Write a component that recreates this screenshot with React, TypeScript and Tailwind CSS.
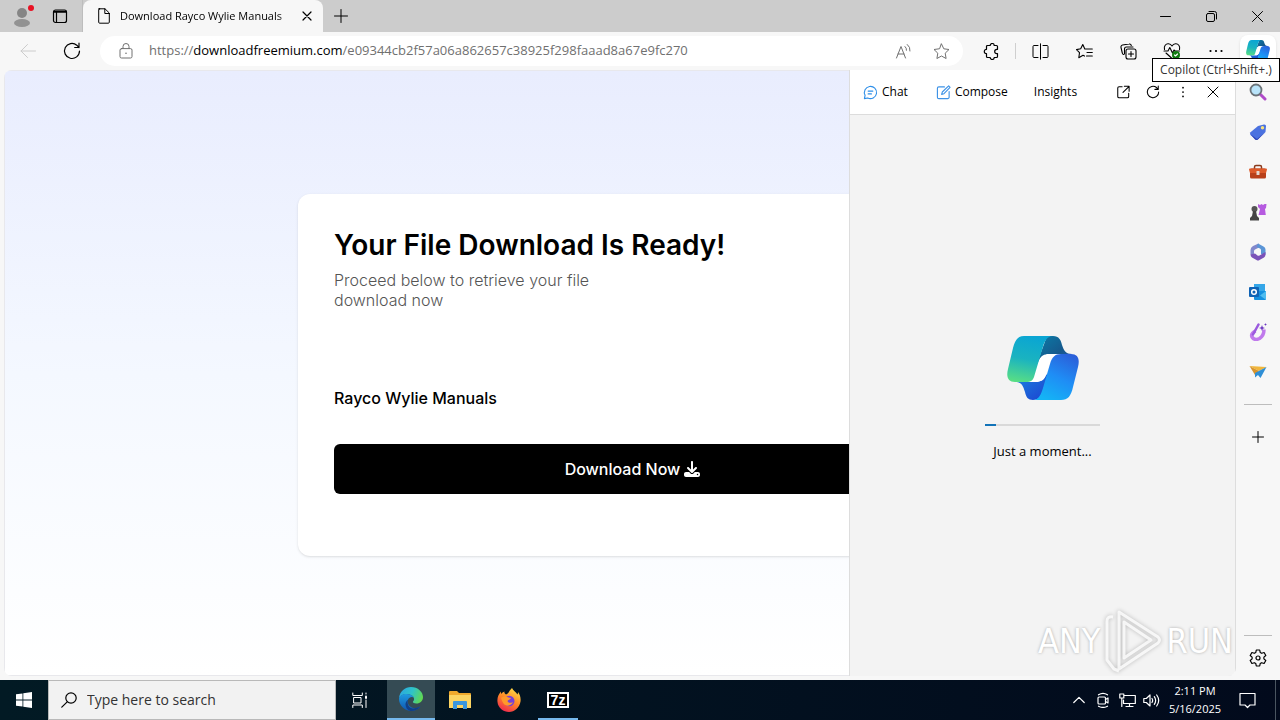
import type { ReactNode } from "react"
import { FaDownload } from "react-icons/fa6"

type IconProps = {
  size?: number
  box?: number
  className?: string
  stroke?: number
  children: ReactNode
}

function Icon({ size = 16, box = 16, className = "", stroke = 1, children }: IconProps) {
  return (
    <svg
      width={size}
      height={size}
      viewBox={`0 0 ${box} ${box}`}
      fill="none"
      stroke="currentColor"
      strokeWidth={stroke}
      strokeLinecap="round"
      strokeLinejoin="round"
      className={`shrink-0 ${className}`}
      aria-hidden="true"
    >
      {children}
    </svg>
  )
}

function CopilotLogo({ id, className }: { id: string; className: string }) {
  return (
    <svg viewBox="0 0 72 64" className={className} aria-hidden="true">
      <defs>
        <linearGradient id={`${id}-left`} x1="0.5" y1="0" x2="0.3" y2="1">
          <stop offset="0" stopColor="#0aa5d3" />
          <stop offset="0.5" stopColor="#1ab3c0" />
          <stop offset="1" stopColor="#57dd86" />
        </linearGradient>
        <linearGradient id={`${id}-right`} x1="0.8" y1="0" x2="0.3" y2="1">
          <stop offset="0" stopColor="#2b5fd9" />
          <stop offset="0.5" stopColor="#1f8df5" />
          <stop offset="1" stopColor="#14b4f5" />
        </linearGradient>
        <linearGradient id={`${id}-top`} x1="0" y1="0" x2="1" y2="1">
          <stop offset="0" stopColor="#0a7da8" />
          <stop offset="0.6" stopColor="#16588c" />
          <stop offset="1" stopColor="#2458b8" />
        </linearGradient>
        <linearGradient id={`${id}-bottom`} x1="0" y1="0" x2="1" y2="1">
          <stop offset="0" stopColor="#1a86e0" />
          <stop offset="1" stopColor="#1d3fd0" />
        </linearGradient>
      </defs>
      <path d="M40 0H46C52 0 54 4 55 9C57 15 59 18 65 18H44C38 18 36 20 34 25L29 30Z" fill={`url(#${id}-top)`} />
      <path d="M8 46H28C34 46 37 44 39 39L43 36L37 51C35 60 32 64 26 64C21 64 19 61 18 56C16 50 15 46 8 46Z" fill={`url(#${id}-bottom)`} />
      <path d="M42 18H54C47 19 45 22 43 28L39 39C37 44 34 46 28 46H18L30 28L32 24C34 20 37 18 42 18Z" fill="#fff" />
      <path d="M17 0H46C39 0 37 7 35 14L27 41C26 44 24 46 19 46H8C1 46 -1 41 1 33L6 12C8 4 11 0 17 0Z" fill={`url(#${id}-left)`} />
      <path d="M54 18H64C71 18 73 23 71 31L66 51C64 60 61 64 54 64H26C32 64 34 58 36 52L43 28C45 21 48 18 54 18Z" fill={`url(#${id}-right)`} />
    </svg>
  )
}

function IconButton({ label, className = "w-11", children }: { label: string; className?: string; children: ReactNode }) {
  return (
    <button type="button" aria-label={label} className={`flex h-8 shrink-0 items-center justify-center ${className}`}>
      {children}
    </button>
  )
}

function TabStrip() {
  return (
    <header className="flex h-8 shrink-0 bg-[#cccccc]">
      <div className="flex w-[83px] shrink-0 items-center border-r border-[#bdbdbd] pl-1">
        <IconButton label="Profile" className="w-9">
          <svg width="24" height="24" viewBox="-1 0 24 24" aria-hidden="true">
            <circle cx="11" cy="9" r="5" fill="#858585" />
            <ellipse cx="11" cy="19" rx="8" ry="4" fill="#929292" />
            <circle cx="20" cy="4" r="3" fill="#e81123" />
          </svg>
        </IconButton>
        <IconButton label="Workspaces" className="w-10">
          <Icon>
            <rect x="1.500" y="2" width="13" height="12.500" rx="2" strokeWidth="1.200" />
            <path d="M2 3.800h12" strokeWidth="2" />
            <path d="M4.500 4v10" strokeWidth="1.200" />
          </Icon>
        </IconButton>
      </div>
      <div className="flex w-60 items-center rounded-t-lg bg-[#f7f7f7] px-3">
        <Icon size={16} className="ml-px">
          <path d="M3 .8h6L13.300 5v9.200a1 1 0 0 1-1 1H3.700a1 1 0 0 1-1-1V1.800a1 1 0 0 1 1-1zM8.800.8V5.500h4.500" />
        </Icon>
        <span className="ml-2 min-w-0 flex-1 overflow-hidden bg-linear-to-r from-black from-90% to-[#999999] bg-clip-text text-[11px] whitespace-nowrap text-transparent">
          Download Rayco Wylie Manuals
        </span>
        <IconButton label="Close tab" className="-mr-3 w-8">
          <Icon size={10} box={10} stroke={1.2}>
            <path d="M1 1l8 8M9 1L1 9" />
          </Icon>
        </IconButton>
      </div>
      <IconButton label="New tab" className="w-9">
        <Icon size={14} box={14}>
          <path d="M7 .5v13M.5 7h13" />
        </Icon>
      </IconButton>
      <div className="ml-auto flex">
        <IconButton label="Minimize" className="w-[46px]">
          <Icon size={11} box={11}>
            <path d="M.5 5.500h10" />
          </Icon>
        </IconButton>
        <IconButton label="Restore" className="w-[46px]">
          <Icon size={11} box={11}>
            <rect x=".5" y="2.500" width="8" height="8" rx="1.500" />
            <path d="M3 .5h5.500a2 2 0 0 1 2 2V8" />
          </Icon>
        </IconButton>
        <IconButton label="Close" className="w-[46px]">
          <Icon size={11} box={11}>
            <path d="M.5.5l10 10M10.500.5l-10 10" />
          </Icon>
        </IconButton>
      </div>
    </header>
  )
}

function Toolbar() {
  return (
    <nav className="flex h-[38px] shrink-0 items-center bg-[#f7f7f7] pr-1 pl-1.5">
      <IconButton label="Back">
        <Icon className="text-[#cccccc]">
          <path d="M15.500 8H1M7.500 1.500L1 8l6.500 6.500" />
        </Icon>
      </IconButton>
      <IconButton label="Refresh">
        <Icon size={18} box={18} stroke={1.200}>
          <path d="M16.500 9A7.500 7.500 0 1 1 13.800 3.200L16 5.500M16 1.200v4.300h-4.300" />
        </Icon>
      </IconButton>
      <div className="ml-1.5 flex h-[30px] min-w-0 flex-1 items-center rounded-full bg-white pr-1 pl-[18px] text-[#707070]">
        <Icon>
          <rect x="2" y="5.600" width="12" height="9.400" rx="1.500" />
          <path d="M5 5.500V3.500a3 3 0 0 1 6 0v2" />
          <circle cx="8" cy="10.300" r=".8" fill="currentColor" stroke="none" />
        </Icon>
        <a href="#page" className="ml-[15px] min-w-0 flex-1 truncate text-[13px] text-[#707070]">
          https://<span className="text-black">downloadfreemium.com</span>/e09344cb2f57a06a862657c38925f298faaad8a67e9fc270
        </a>
        <IconButton label="Read aloud" className="w-10">
          <Icon size={17} box={17}>
            <path d="M1.500 15L6 3.500 10.500 15M3 11h6M10 3.500q1.800 1.500 1.500 3.800M12.300 1.500q3.200 2.500 2.700 6.500" />
          </Icon>
        </IconButton>
        <IconButton label="Favorite" className="w-9">
          <Icon size={17} box={17}>
            <path d="M8.500 1l2.300 4.800 5.200.7-3.800 3.700.9 5.300-4.600-2.500-4.600 2.500.9-5.300L1 6.500l5.200-.7z" />
          </Icon>
        </IconButton>
      </div>
      <IconButton label="Extensions" className="ml-1.5 w-11">
        <Icon size={17} box={17} stroke={1.200}>
          <path d="M3.500 6.300V3.500a1 1 0 0 1 1-1h2.700a2 2 0 0 1 4 0h2.300a1 1 0 0 1 1 1v2.800h-.6a2.200 2.200 0 0 0 0 4.400h.6v2.800a1 1 0 0 1-1 1h-2.300a2 2 0 0 1-4 0H4.500a1 1 0 0 1-1-1v-2.800a2.200 2.200 0 0 1 0-4.400z" />
        </Icon>
      </IconButton>
      <span className="mx-0.5 h-4 w-px bg-[#cfcfcf]" />
      <IconButton label="Split screen">
        <Icon size={17} box={17}>
          <path d="M6 2.500H2a1 1 0 0 0-1 1v10a1 1 0 0 0 1 1h4M11 2.500h4a1 1 0 0 1 1 1v10a1 1 0 0 1-1 1h-4M8.500.8v15.400" />
        </Icon>
      </IconButton>
      <IconButton label="Favorites bar">
        <Icon size={17} box={17} stroke={1.100}>
          <path d="M9.500 6h6.800M11 9.500h5.300M10.500 13h5.800M9.500 6h-.7L6.800 1.500 4.700 5.800l-4.200.8 3 3.100L2.800 14.800l4.200-2.500 1.500.8" />
        </Icon>
      </IconButton>
      <IconButton label="Collections">
        <Icon size={17} box={17} stroke={1.100}>
          <rect x="6" y="6" width="10" height="10" rx="2" />
          <path d="M11 8.500v5M8.500 11h5M3.500 11.500A2 2 0 0 1 2.300 10L1 4.500A2 2 0 0 1 2.500 2L9 1a2 2 0 0 1 2.300 1.500M4.500 11V6a2 2 0 0 1 2-2H13" />
        </Icon>
      </IconButton>
      <IconButton label="Browser essentials">
        <Icon size={18} box={18} stroke={1.100}>
          <path d="M1.500 7.500C.5 4 3 1.500 5.500 1.800 7.300 2 8.300 3 9 4c.7-1 1.700-2 3.500-2.200C15 1.500 17.500 4 16.500 7.500M3 11l6 5.500M1 9h4l1.800-3.500L9.500 11 11 8l1 1h4.500" />
          <circle cx="13" cy="13" r="4" fill="#107c10" stroke="none" />
          <path d="M11.500 13l1 1 2-2" stroke="#fff" />
        </Icon>
      </IconButton>
      <IconButton label="Settings and more">
        <Icon>
          <path d="M2.500 8h.01M8 8h.01M13.500 8h.01" strokeWidth="2.200" />
        </Icon>
      </IconButton>
      <IconButton label="Copilot" className="ml-0.5 w-9 rounded-lg bg-white shadow-sm">
        <CopilotLogo id="mini" className="w-6" />
      </IconButton>
    </nav>
  )
}

function DownloadPage() {
  return (
    <main
      id="page"
      className="flex w-[calc(100%+25px)] shrink-0 items-center justify-center border border-[#e8e8ec] bg-linear-to-b from-[#e9edfe] via-[#f4f8ff] to-white pt-1"
    >
      <section className="w-full max-w-[669px] rounded-xl bg-white px-9 pt-9 pb-[62px] font-[Inter,sans-serif] shadow-sm">
        <h1 className="text-[28px] leading-[30px] font-semibold text-black">Your File Download Is Ready!</h1>
        <p className="mt-2.5 max-w-[290px] text-base leading-5 font-light text-[#555555]">
          Proceed below to retrieve your file download now
        </p>
        <h2 className="mt-[76px] text-base leading-6 font-medium text-black">Rayco Wylie Manuals</h2>
        <button
          type="button"
          className="mt-[34px] flex h-[50px] w-full items-center justify-center gap-1 rounded-md bg-black text-base font-medium text-white"
        >
          Download Now
          <FaDownload />
        </button>
      </section>
    </main>
  )
}

function CopilotPanel() {
  return (
    <aside className="absolute inset-y-0 right-0 flex w-[387px] flex-col border-x border-[#dddddd] bg-[#f3f3f3]">
      <div className="flex h-[45px] shrink-0 items-center border-b border-[#dcdcdc] bg-white pr-[7px] pl-[13px] text-xs text-black">
        <button type="button" className="flex items-center gap-1">
          <Icon size={15} className="text-[#2f8fe8]" stroke={1.200}>
            <path d="M1.500 14.500l.7-3.500A6.500 6.500 0 1 1 5 13.800zM5.500 6.500h5M5.500 9.500h3.500" />
          </Icon>
          Chat
        </button>
        <button type="button" className="ml-7 flex items-center gap-1">
          <Icon size={15} className="text-[#3d92e6]" stroke={1.200}>
            <path d="M9 2H3a1.500 1.500 0 0 0-1.500 1.500v9.500A1.500 1.500 0 0 0 3 14.500h9.500A1.500 1.500 0 0 0 14 13V7M6 10l.7-2.500L13.500 1 15 2.500 8.500 9.300z" />
          </Icon>
          Compose
        </button>
        <button type="button" className="ml-[26px]">Insights</button>
        <div className="ml-auto flex">
          <IconButton label="Open in new tab" className="w-[30px]">
            <Icon size={14} stroke={1.200}>
              <path d="M7 2H3.500A1.500 1.500 0 0 0 2 3.500v9.500a1.500 1.500 0 0 0 1.500 1.500H13a1.500 1.500 0 0 0 1.500-1.500V9.500M9.500 1.500h5.500V7M15 1.500L8 8.500" />
            </Icon>
          </IconButton>
          <IconButton label="Reload Copilot" className="w-[30px]">
            <Icon size={14} stroke={1.200}>
              <path d="M14.500 8A6.500 6.500 0 1 1 12 2.900L14 5M14 1.200V5h-3.800" />
            </Icon>
          </IconButton>
          <IconButton label="More options" className="w-[30px]">
            <Icon size={14}>
              <path d="M8 3h.01M8 8h.01M8 13h.01" strokeWidth="2" />
            </Icon>
          </IconButton>
          <IconButton label="Close Copilot" className="w-[30px]">
            <Icon size={12} box={12}>
              <path d="M1 1l10 10M11 1L1 11" />
            </Icon>
          </IconButton>
        </div>
      </div>
      <div className="flex flex-1 flex-col items-center justify-center pt-1.5">
        <CopilotLogo id="panel" className="w-[72px]" />
        <div className="mt-6 h-0.5 w-[115px] bg-[#d9d9d9]">
          <div className="h-full w-[11px] bg-[#1273b8]" />
        </div>
        <p className="mt-3.5 text-[13px] leading-[22px] text-black">Just a moment...</p>
      </div>
      <div className="pointer-events-none absolute right-0.5 bottom-0 flex items-center font-['Liberation_Sans_Narrow','DejaVu_Sans_Condensed',sans-serif] text-[34px] leading-[70px] text-white [text-shadow:0_0_3px_#a8a8a8]">
        <span>ANY</span>
        <svg width="62" height="66" viewBox="0 0 62 66" fill="none" className="mx-0.5 drop-shadow-[0_0_2px_#a8a8a8]" aria-hidden="true">
          <path d="M17 4L56 29Q59 32 56 35L17 61V4zM22 14v36l27-18zM11 9Q5 8 5 13v39l7 9 5 2" stroke="#fff" strokeOpacity=".8" strokeWidth="3" strokeLinejoin="round" />
        </svg>
        <span>RUN</span>
      </div>
    </aside>
  )
}

const railItems = [
  {
    label: "Search",
    art: (
      <>
        <path d="M11 11l5 5" stroke="#b04bc9" strokeWidth="3" strokeLinecap="round" />
        <circle cx="7" cy="7" r="5.500" fill="#b9e4fa" stroke="#6b7378" strokeWidth="1.800" />
      </>
    ),
  },
  {
    label: "Shopping",
    art: (
      <>
        <path d="M9 3l6-1.500q2-.2 2 1.500L16.500 9 9 16q-1.500 1-3 0L1.500 12q-1-1.500 0-2.700z" fill="#4b72e0" />
        <path d="M1.300 11L8 16l8.500-7L9 16.500q-1.500 1-3 0z" fill="#3046b8" />
        <circle cx="13.500" cy="4.700" r="1.700" fill="#f9e27a" />
      </>
    ),
  },
  {
    label: "Tools",
    art: (
      <>
        <path d="M5.500 6V4q0-1.500 1.500-1.500h4q1.500 0 1.500 1.500v2" fill="none" stroke="#8a3a1c" strokeWidth="1.500" />
        <rect x="1" y="5.500" width="16" height="10" rx="1.500" fill="#b8401a" />
        <path d="M0 6.500q0-1 1-1h16q1 0 1 1L17 10H1z" fill="#dc5a2a" />
        <rect x="7.500" y="8" width="3" height="4" rx=".5" fill="#e4d8d0" />
      </>
    ),
  },
  {
    label: "Games",
    art: (
      <>
        <path d="M9 1l2 1 1.500-1L14 2l1.500-1L17.500 1 17 5l-1 1 .8 6H9.500L11 6 9 4z" fill="#b65be0" />
        <circle cx="5.500" cy="6" r="3" fill="#555" />
        <path d="M4 8h3l1 5 2 2v2.500H1V15l2-2z" fill="#444" />
      </>
    ),
  },
  {
    label: "Microsoft 365",
    art: (
      <>
        <path d="M9.500.5L4 3Q1.500 4.500 1.500 7v4.500L5 13V8q0-1 1-1.600L11 4z" fill="#8288cc" />
        <path d="M9 .5l5.500 3q2 1 2 3V11q0 1-1 1.500L12 11V7q0-1-1-1.600L7.500 4z" fill="#5b95d6" />
        <path d="M1.500 11.500L6 10.500l2.500 2q1 .5 2 0L16.500 9v2.500q0 2-1.500 3L10.500 17Q9 18 7.500 17L3 14.500q-1.500-1-1.500-3z" fill="#7b52b8" />
      </>
    ),
  },
  {
    label: "Outlook",
    art: (
      <>
        <path d="M5 1h11v9H5z" fill="#35a6e8" />
        <path d="M5 8h12v8q0 1-1 1H6q-1 0-1-1z" fill="#1490df" />
        <path d="M17 8l-6 4.500 5.500 4q.500 0 .5-1z" fill="#4fbdf0" />
        <rect x="0" y="4" width="10" height="10" rx="1" fill="#0f63b5" />
        <circle cx="5" cy="9" r="2.300" fill="none" stroke="#fff" strokeWidth="1.500" />
      </>
    ),
  },
  {
    label: "Designer",
    art: (
      <>
        <path d="M6.500 8q-5 2.500-3.500 6 2.500 4 7.500 1.500 4.500-3 4.500-9" fill="none" stroke="#c07aec" strokeWidth="3.500" />
        <path d="M9.500 1.500L4 11.500" stroke="#9a5ade" strokeWidth="2.500" strokeLinecap="round" />
        <path d="M13 2l.8 2.200L16 5l-2.200.8L13 8l-.8-2.200L10 5l2.200-.8zM16.500 0l.4 1.100 1.100.4-1.100.4-.4 1.100-.4-1.100-1.100-.4 1.100-.4z" fill="#6a35c0" />
      </>
    ),
  },
  {
    label: "Drop",
    art: (
      <>
        <path d="M.5 3L17.500 4 10 8z" fill="#f0b63c" />
        <path d="M.5 3L10 8l-4 4z" fill="#d8942c" />
        <path d="M17.500 4L6 10v4.500L9 12l2.500 3z" fill="#2f8fd6" />
      </>
    ),
  },
]

function Rail() {
  return (
    <aside className="flex w-11 shrink-0 flex-col items-center bg-[#f7f7f7] pt-0.5">
      {railItems.map((item) => (
        <button key={item.label} type="button" aria-label={item.label} className="flex h-10 w-full shrink-0 items-center justify-center">
          <svg width="18" height="18" viewBox="0 0 18 18" aria-hidden="true">
            {item.art}
          </svg>
        </button>
      ))}
      <hr className="mt-3 w-7 border-[#bdbdbd]" />
      <IconButton label="Customize" className="mt-4 w-full">
        <Icon size={12} box={12}>
          <path d="M6 .5v11M.5 6h11" />
        </Icon>
      </IconButton>
      <hr className="mt-auto w-7 border-[#bdbdbd]" />
      <IconButton label="Sidebar settings" className="my-1.5 w-full">
        <Icon size={18} box={18} stroke={1.200}>
          <path d="M7.300 1h3.400l.5 2.400 1.500.9 2.400-.8 1.700 3-1.900 1.600v1.800l1.900 1.600-1.700 3-2.400-.8-1.500.9-.5 2.400H7.300l-.5-2.400-1.500-.9-2.400.8-1.700-3 1.900-1.600V8.100L1.200 6.500l1.700-3 2.400.8 1.500-.9z" />
          <circle cx="9" cy="9" r="2" />
        </Icon>
      </IconButton>
    </aside>
  )
}

function EdgeLogo() {
  return (
    <svg width="24" height="24" viewBox="0 0 24 24" aria-hidden="true">
      <defs>
        <linearGradient id="edge-top" x1="0" y1=".3" x2="1" y2=".6">
          <stop offset="0" stopColor="#2ba7e0" />
          <stop offset=".5" stopColor="#2fc3c9" />
          <stop offset="1" stopColor="#62d94e" />
        </linearGradient>
        <linearGradient id="edge-body" x1="0" y1="0" x2="0" y2="1">
          <stop offset="0" stopColor="#1f9be0" />
          <stop offset="1" stopColor="#0f55b0" />
        </linearGradient>
      </defs>
      <path d="M0 11C1 4 6 0 12 0c7 0 12 5 12 10 0 4-3 6.500-6.500 6.500-3 0-4-1.200-3.500-2 1-1.200 1.200-2 1-3C14.500 8.500 11 7 7.500 7 4 7 1 9 0 11z" fill="url(#edge-top)" />
      <path d="M0 12c0-3 3-5 7.500-5C11 7 14 8.500 15 11c-1.500-1.800-5-1-6 1.800-1.200 4 2 9 8 8.200 2-.3 3.500-1 4.500-1.700C19 23 15 24.200 11.500 24 5 23.500 0 18 0 12z" fill="url(#edge-body)" />
      <path d="M9 12.800C7.500 18 11 23 17 21c2-.5 3.500-1 4.500-1.700C19 23 15 24.200 11.500 24 6.500 22.500 4.500 16 9 12.800z" fill="#123f86" />
    </svg>
  )
}

function FirefoxLogo() {
  return (
    <svg width="24" height="24" viewBox="0 0 24 24" aria-hidden="true">
      <defs>
        <linearGradient id="fox" x1=".8" y1="0" x2=".3" y2="1">
          <stop offset="0" stopColor="#ffe14a" />
          <stop offset=".5" stopColor="#ff8a26" />
          <stop offset="1" stopColor="#f0284f" />
        </linearGradient>
      </defs>
      <path d="M15 0c1 3 4 3.500 5.500 6.500C21 5.500 21 5 21 4c2 2.500 3 6 2.500 9.500C22.500 19.500 17.500 24 12 24S1 20 .5 14C0 9.500 1.500 6.500 4 3.500V6c1-1 2-2 3.500-2.500C7 5 8 6 9 6.500c2-.5 3.500-4 6-6.500z" fill="url(#fox)" />
      <circle cx="12.300" cy="13" r="5.200" fill="#7540d8" />
      <path d="M4 10c2-2 5-2 7.500-.5L14 10c-1 2-3 1.500-3.500 3 .5 2 3 2.500 5.500 1-1.500 4-7 5-9.500 1.500C5 13.500 5 12 4 10z" fill="#ff9a2a" />
    </svg>
  )
}

function Taskbar() {
  return (
    <footer className="flex h-10 shrink-0 bg-[#021420] bg-linear-to-r from-[#021a24] to-[#020a1c] text-white">
      <button type="button" aria-label="Start" className="flex w-12 items-center justify-center">
        <svg width="16" height="16" viewBox="0 0 16 16" fill="#fff" aria-hidden="true">
          <path d="M0 2.300L6.500 1.400V7.600H0zM7.300 1.300L16 0v7.600H7.300zM0 8.400h6.500v6.200L0 13.700zM7.300 8.400H16V16l-8.700-1.300z" />
        </svg>
      </button>
      <label className="flex w-72 items-center gap-2.5 border border-[#b9b9b9] bg-[#f2f2f2] pl-3 text-black">
        <Icon size={16} stroke={1.200}>
          <circle cx="10" cy="6" r="5.200" />
          <path d="M6.200 9.800L.8 15.200" />
        </Icon>
        <input
          type="text"
          aria-label="Search"
          placeholder="Type here to search"
          className="min-w-0 flex-1 bg-transparent text-sm placeholder:text-[#333333] focus:outline-none"
        />
      </label>
      <button type="button" aria-label="Task view" className="flex w-12 items-center justify-center">
        <Icon size={16}>
          <path d="M.8 1v2.500h9.500V1M.8 15.500V13h9.500v2.500M2 5.500h7V11H2zM14 1v1M14 8v7.500" />
          <path d="M14 4.500v1.500" strokeWidth="2" />
        </Icon>
      </button>
      <div className="ml-[3px] flex gap-px">
        <button type="button" aria-label="Microsoft Edge" className="flex w-12 items-center justify-center border-b-2 border-[#76b9ed] bg-[#354b54]">
          <EdgeLogo />
        </button>
        <button type="button" aria-label="File Explorer" className="flex w-12 items-center justify-center">
          <svg width="22" height="20" viewBox="0 0 22 20" aria-hidden="true">
            <path d="M0 2q0-1 1-1h7l2 2h11q1 0 1 1v14H0z" fill="#f0a92c" />
            <path d="M0 5h22v13H0z" fill="#fcd462" />
            <path d="M4 19v-7q0-1 1-1h12q1 0 1 1v7h-4v-4H8v4z" fill="#3a96dd" />
          </svg>
        </button>
        <button type="button" aria-label="Firefox" className="flex w-12 items-center justify-center">
          <FirefoxLogo />
        </button>
        <button type="button" aria-label="7-Zip" className="flex w-12 flex-col items-center">
          <span className="mt-3 flex h-4 w-[22px] items-center justify-center border-2 border-white bg-black font-['Liberation_Sans',sans-serif] text-sm leading-3 font-bold">
            7z
          </span>
          <span className="mt-auto h-0.5 w-10 bg-[#76b9ed]" />
        </button>
      </div>
      <div className="ml-auto flex items-center">
        <IconButton label="Hidden icons" className="w-6">
          <Icon size={12} box={12} stroke={1.200}>
            <path d="M.8 8.500L6 3.300l5.200 5.200" />
          </Icon>
        </IconButton>
        <IconButton label="Meet now" className="w-6">
          <Icon size={16} stroke={1.200}>
            <rect x="3" y="5" width="7.500" height="7" rx="1" />
            <path d="M10.500 7.500L13 6v5l-2.500-1.500M3.500 2.800q4.500-3 9 0M3.500 14.200q4.500 2.500 9 0" />
          </Icon>
        </IconButton>
        <IconButton label="Network" className="w-6">
          <Icon size={17} box={17} stroke={1.200}>
            <path d="M5.500 3.500h10.800v8H4.500V8M7 14.500h7M10.500 11.500v3M.8 2h4v4h-4zM2.800 6v8.500" />
          </Icon>
        </IconButton>
        <IconButton label="Volume" className="w-6">
          <Icon size={17} box={17} stroke={1.200}>
            <path d="M.8 6.500h2.500L7 3v11l-3.700-3.500H.8zM9 6.500q1.300 2 0 4M11.300 4.700q2.700 3.800 0 7.600M13.700 3q4 5.500 0 11" />
          </Icon>
        </IconButton>
        <time dateTime="2025-05-16T14:11" className="w-16 text-center text-[11px] leading-[18px]">
          2:11 PM
          <br />
          5/16/2025
        </time>
        <IconButton label="Notifications" className="w-10">
          <Icon size={17} box={17} stroke={1.200}>
            <path d="M1 1.500h15v11.500h-5L8.500 15.500 6 13H1z" />
          </Icon>
        </IconButton>
        <span className="ml-2 h-10 w-[5px] border-l border-[#4a5560]" />
      </div>
    </footer>
  )
}

export default function App() {
  return (
    <div className="relative flex h-screen flex-col overflow-hidden bg-[#f7f7f7] font-['Open_Sans','Noto_Sans',sans-serif]">
      <TabStrip />
      <Toolbar />
      <div className="flex min-h-0 flex-1">
        <div className="relative mb-1 ml-1 flex min-w-0 flex-1 overflow-hidden rounded-lg">
          <DownloadPage />
          <CopilotPanel />
        </div>
        <Rail />
      </div>
      <Taskbar />
      <div role="tooltip" className="absolute top-[58px] right-0 flex h-6 w-32 items-center justify-center border border-black bg-white text-xs whitespace-nowrap text-[#333333]">
        Copilot (Ctrl+Shift+.)
      </div>
    </div>
  )
}
